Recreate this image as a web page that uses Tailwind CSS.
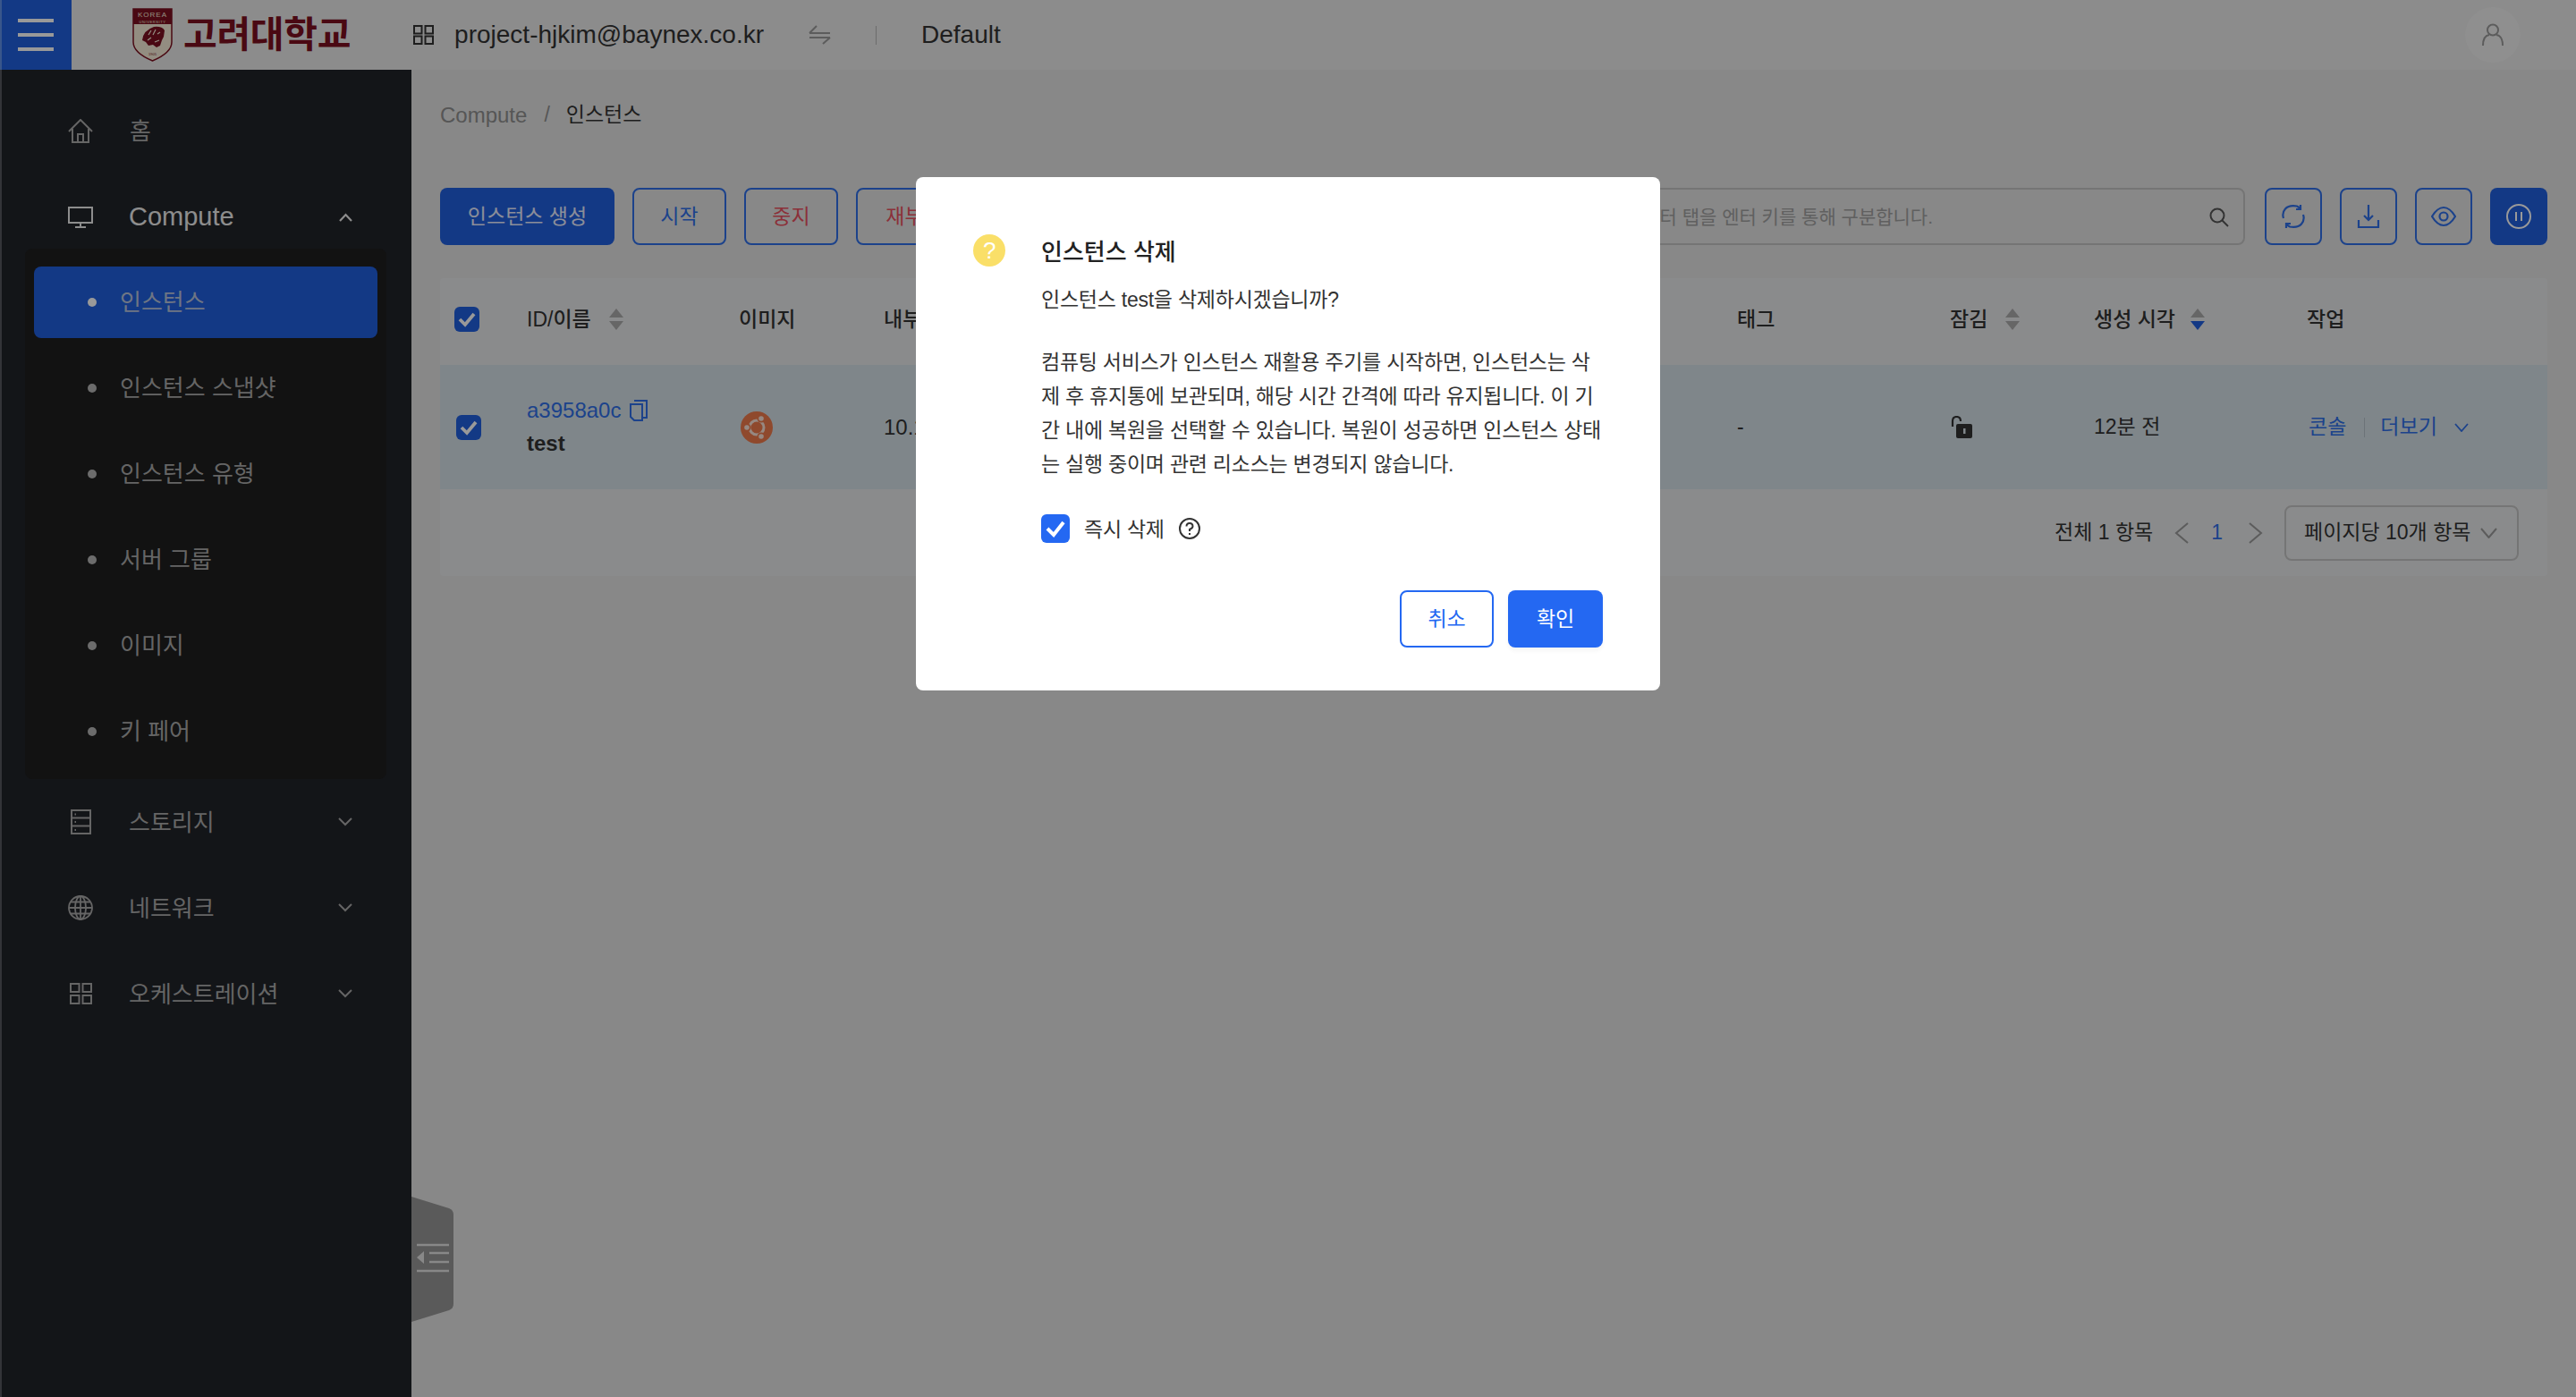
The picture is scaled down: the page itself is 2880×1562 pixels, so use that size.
<!DOCTYPE html>
<html lang="ko">
<head>
    <meta charset="UTF-8">
    <title>인스턴스</title>
    <script src="https://cdn.jsdelivr.net/npm/@tailwindcss/browser@4"></script>
</head>
<body class="relative h-[1562px] w-[2880px] overflow-hidden bg-[#e3e3e3] font-['Liberation_Sans','Noto_Sans_CJK_KR',sans-serif] text-[#333]">

    <!-- Header -->
    <header class="flex h-[78px] items-center bg-[#e9e9e9]">
        <div class="flex h-full w-[80px] flex-col items-center justify-center gap-[12px] border-l-2 border-[#5f8fe8] bg-[#215fde] pr-[2px]">
            <span class="h-[4px] w-[40px] bg-white"></span>
            <span class="h-[4px] w-[40px] bg-white"></span>
            <span class="h-[4px] w-[40px] bg-white"></span>
        </div>
        <div class="ml-[68px] flex items-center">
            <svg class="h-[60px] w-[45px]" viewBox="0 0 45 60">
                <path d="M1 1H44V38Q44 50 22.500 59Q1 50 1 38Z" fill="#f5ebd8" stroke="#7c1020" stroke-width="1.500"/>
                <rect x="1" y="1" width="43" height="17" fill="#7c1020"/>
                <text x="22.500" y="10" text-anchor="middle" font-size="8" letter-spacing="1" fill="#f5ebd8">KOREA</text>
                <text x="22.500" y="16.500" text-anchor="middle" font-size="4" letter-spacing=".6" fill="#f5ebd8">UNIVERSITY</text>
                <path d="M11 36Q12 25 24 21Q33 20 36 25L35 32L33 36L31 42L27 44L23 41L18 42L15 38Z" fill="#7c1020"/>
                <path d="M18 30L21 25M23 30L26 24M17 36L21 33M28 29L31 27M25 38L30 36" stroke="#f5ebd8" stroke-width="1.200"/>
                <text x="22.500" y="53" text-anchor="middle" font-size="4" fill="#7c1020">1905</text>
            </svg>
            <span class="ml-[12px] text-[41px] leading-none font-bold tracking-[-0.300px] text-[#7c1020]">고려대학교</span>
        </div>
        <svg class="ml-[70px] h-[22px] w-[23px] text-[#333]" viewBox="0 0 23 22" fill="none" stroke="currentColor" stroke-width="2">
            <rect x="1" y="1" width="8.500" height="8.500"/><rect x="13.500" y="1" width="8.500" height="8.500"/><rect x="1" y="12.500" width="8.500" height="8.500"/><rect x="13.500" y="12.500" width="8.500" height="8.500"/>
        </svg>
        <span class="ml-[23px] text-[28px] text-[#333]">project-hjkim@baynex.co.kr</span>
        <svg class="ml-[50px] h-[22px] w-[25px] text-[#9a9a9a]" viewBox="0 0 25 22" fill="none" stroke="currentColor" stroke-width="2">
            <path d="M1 9H24M1 9L9 1M24 14H1M24 14L16 21"/>
        </svg>
        <span class="ml-[50px] h-[21px] w-px bg-[#b5b5b5]"></span>
        <span class="ml-[50px] text-[28px] text-[#333]">Default</span>
        <div class="ml-auto mr-[62px] flex h-[62px] w-[62px] items-center justify-center rounded-full bg-[#eeeeee]">
            <svg class="h-[26px] w-[24px] text-[#999]" viewBox="0 0 24 26" fill="none" stroke="currentColor" stroke-width="2">
                <circle cx="12" cy="7.500" r="6"/><path d="M1 25Q1 14 8 13M23 25Q23 14 16 13"/>
            </svg>
        </div>
    </header>

    <div class="flex h-[1484px]">
        <!-- Sidebar -->
        <aside class="relative w-[460px] shrink-0 border-l-2 border-[#55585e] bg-[#212328] pt-[21px] text-[26px] text-[#a8a8a8]">
            <div class="flex h-[96px] items-center pl-[74px]">
                <svg class="h-[28px] w-[28px]" viewBox="0 0 28 28" fill="none" stroke="currentColor" stroke-width="2">
                    <path d="M1 14L14 1L27 14M5 11V26H23V11M11 26V17H17V26"/>
                </svg>
                <span class="ml-[41px]">홈</span>
            </div>
            <div class="flex h-[96px] items-center pl-[74px] text-[#ececec]">
                <svg class="h-[24px] w-[28px]" viewBox="0 0 28 24" fill="none" stroke="currentColor" stroke-width="2">
                    <rect x="1" y="1" width="26" height="17"/><path d="M14 18V23M8 23H20"/>
                </svg>
                <span class="ml-[40px] text-[29px]">Compute</span>
                <svg class="ml-auto mr-[66px] h-[10px] w-[15px]" viewBox="0 0 15 10" fill="none" stroke="currentColor" stroke-width="2.200"><path d="M1 9L7.500 2L14 9"/></svg>
            </div>
            <div class="-mt-[13px] ml-[26px] flex w-[404px] flex-col gap-[16px] rounded-[8px] bg-[#1e1e1e] px-[10px] pt-[20px] pb-[13px]">
                <a class="flex h-[80px] items-center gap-[26px] rounded-[8px] bg-[#215fde] pl-[60px] text-[#b8c4dc]"><span class="h-[10px] w-[10px] rounded-full bg-white"></span>인스턴스</a>
                <a class="flex h-[80px] items-center gap-[26px] pl-[60px]"><span class="h-[10px] w-[10px] rounded-full bg-[#b5b5b5]"></span>인스턴스 스냅샷</a>
                <a class="flex h-[80px] items-center gap-[26px] pl-[60px]"><span class="h-[10px] w-[10px] rounded-full bg-[#b5b5b5]"></span>인스턴스 유형</a>
                <a class="flex h-[80px] items-center gap-[26px] pl-[60px]"><span class="h-[10px] w-[10px] rounded-full bg-[#b5b5b5]"></span>서버 그룹</a>
                <a class="flex h-[80px] items-center gap-[26px] pl-[60px]"><span class="h-[10px] w-[10px] rounded-full bg-[#b5b5b5]"></span>이미지</a>
                <a class="flex h-[80px] items-center gap-[26px] pl-[60px]"><span class="h-[10px] w-[10px] rounded-full bg-[#b5b5b5]"></span>키 페어</a>
            </div>
            <div class="flex h-[96px] items-center pl-[77px]">
                <svg class="h-[28px] w-[23px]" viewBox="0 0 23 28" fill="none" stroke="currentColor" stroke-width="2">
                    <rect x="1" y="1" width="21" height="26"/><path d="M1 9.500H22M1 18.500H22"/><path d="M4.500 5.500H6M4.500 14H6M4.500 23H6"/>
                </svg>
                <span class="ml-[42px] pt-[2px]">스토리지</span>
                <svg class="ml-auto mr-[66px] h-[10px] w-[16px]" viewBox="0 0 16 10" fill="none" stroke="currentColor" stroke-width="2"><path d="M1 1L8 8L15 1"/></svg>
            </div>
            <div class="flex h-[96px] items-center pl-[74px]">
                <svg class="h-[28px] w-[28px]" viewBox="0 0 28 28" fill="none" stroke="currentColor" stroke-width="1.800">
                    <circle cx="14" cy="14" r="13"/><ellipse cx="14" cy="14" rx="6" ry="13"/><path d="M14 1V27M1 14H27M3 7.500H25M3 20.500H25"/>
                </svg>
                <span class="ml-[40px] pt-[2px]">네트워크</span>
                <svg class="ml-auto mr-[66px] h-[10px] w-[16px]" viewBox="0 0 16 10" fill="none" stroke="currentColor" stroke-width="2"><path d="M1 1L8 8L15 1"/></svg>
            </div>
            <div class="flex h-[96px] items-center pl-[76px]">
                <svg class="h-[24px] w-[25px]" viewBox="0 0 25 24" fill="none" stroke="currentColor" stroke-width="2">
                    <rect x="1" y="1" width="9.500" height="9"/><rect x="14.500" y="1" width="9.500" height="9"/><rect x="1" y="14" width="9.500" height="9"/><rect x="14.500" y="14" width="9.500" height="9"/>
                </svg>
                <span class="ml-[41px] pt-[2px]">오케스트레이션</span>
                <svg class="ml-auto mr-[66px] h-[10px] w-[16px]" viewBox="0 0 16 10" fill="none" stroke="currentColor" stroke-width="2"><path d="M1 1L8 8L15 1"/></svg>
            </div>
            <!-- collapse handle -->
            <svg class="absolute left-[458px] top-[1260px] h-[140px] w-[47px]" viewBox="0 0 47 140">
                <path d="M0 0L42 13Q47 15 47 20V120Q47 125 42 127L0 140Z" fill="#969696"/>
                <path d="M6 54H42M6 83H42M20 63H42M20 73H42" stroke="#e3e3e3" stroke-width="2.500"/>
                <path d="M14 61V75L6 68Z" fill="#e3e3e3"/>
            </svg>
        </aside>

        <!-- Main -->
        <main class="flex-1 pl-[32px] pr-[32px]">
            <div class="flex h-[99px] items-center pt-[2px] text-[23px] text-[#8f8f8f]">
                <span class="text-[24px]">Compute</span>
                <span class="ml-[19px] mr-[18px]">/</span>
                <span class="text-[#333]">인스턴스</span>
            </div>
            <div class="flex pt-[33px]">
                <div class="flex gap-[20px] text-[23px]">
                    <button class="h-[64px] w-[195px] rounded-[8px] bg-[#215fde] text-[#e8edff]">인스턴스 생성</button>
                    <button class="h-[64px] w-[105px] rounded-[8px] border-2 border-[#2f6fe8] text-[#2f6fe8]">시작</button>
                    <button class="h-[64px] w-[105px] rounded-[8px] border-2 border-[#2f6fe8] text-[#e8505f]">중지</button>
                    <button class="h-[64px] w-[130px] rounded-[8px] border-2 border-[#2f6fe8] text-[#e8505f]">재부팅</button>
                </div>
                <div class="ml-auto flex items-center gap-[20px]">
                    <div class="mr-[2px] flex h-[64px] w-[1200px] items-center justify-end rounded-[8px] border-2 border-[#c4c4c4] pr-[16px] pt-[2px] text-[21px] text-[#a0a0a0]">
                        <span>검색할 항목을 입력하고 각 필터 탭을 엔터 키를 통해 구분합니다.</span>
                        <svg class="ml-[309px] h-[22px] w-[22px] text-[#555]" viewBox="0 0 22 22" fill="none" stroke="currentColor" stroke-width="2"><circle cx="9" cy="9" r="7.500"/><path d="M14.500 14.500L21 21"/></svg>
                    </div>
                    <button class="flex h-[64px] w-[64px] items-center justify-center rounded-[8px] border-2 border-[#2f6fe8] text-[#2f6fe8]">
                        <svg class="h-[28px] w-[28px]" viewBox="0 0 28 28" fill="none" stroke="currentColor" stroke-width="2.200"><path d="M3 16Q1 10 5 5.500T18 2.500L22 5M25 12Q27 18 23 22.500T10 25.500L6 23"/><path d="M22 1V6H17M6 27V22H11"/></svg>
                    </button>
                    <button class="flex h-[64px] w-[64px] items-center justify-center rounded-[8px] border-2 border-[#2f6fe8] text-[#2f6fe8]">
                        <svg class="h-[28px] w-[26px]" viewBox="0 0 26 28" fill="none" stroke="currentColor" stroke-width="2.200"><path d="M13 1V17M8 13L13 18L18 13M2 18V26H24V18"/></svg>
                    </button>
                    <button class="flex h-[64px] w-[64px] items-center justify-center rounded-[8px] border-2 border-[#2f6fe8] text-[#2f6fe8]">
                        <svg class="h-[24px] w-[28px]" viewBox="0 0 28 24" fill="none" stroke="currentColor" stroke-width="2.200"><path d="M1 12Q7 2 14 2T27 12Q21 22 14 22T1 12Z"/><circle cx="14" cy="12" r="4.500"/></svg>
                    </button>
                    <button class="flex h-[64px] w-[64px] items-center justify-center rounded-[8px] bg-[#215fde] text-white">
                        <svg class="h-[28px] w-[28px]" viewBox="0 0 28 28" fill="none" stroke="currentColor" stroke-width="2"><circle cx="14" cy="14" r="13"/><path d="M11 9V19M17 9V19"/></svg>
                    </button>
                </div>
            </div>

            <!-- Table card -->
            <div class="mt-[37px] h-[333px] rounded-[4px] bg-[#e6e8ea] text-[23px]">
                <div class="grid h-[97px] grid-cols-[97px_239px_160px_954px_238px_161px_238px_1fr] items-center pb-[5px] font-medium text-[#333]">
                    <div class="pl-[16px]">
                        <span class="flex h-[28px] w-[28px] items-center justify-center rounded-[6px] bg-[#215fde]"><svg class="h-[18px] w-[20px]" viewBox="0 0 20 18" fill="none" stroke="white" stroke-width="3.800"><path d="M2 9L8 15L18 3"/></svg></span>
                    </div>
                    <div class="flex items-center"><span>ID/이름</span>
                        <svg class="ml-[20px] h-[24px] w-[16px]" viewBox="0 0 16 24"><path d="M8 0L16 10H0Z" fill="#aaaaaa"/><path d="M8 24L16 14H0Z" fill="#aaaaaa"/></svg>
                    </div>
                    <div class="-ml-[2px]">이미지</div>
                    <div>내부 IP</div>
                    <div>태그</div>
                    <div class="flex items-center"><span>잠김</span>
                        <svg class="ml-[20px] h-[24px] w-[16px]" viewBox="0 0 16 24"><path d="M8 0L16 10H0Z" fill="#aaaaaa"/><path d="M8 24L16 14H0Z" fill="#aaaaaa"/></svg>
                    </div>
                    <div class="flex items-center"><span>생성 시각</span>
                        <svg class="ml-[17px] h-[24px] w-[16px]" viewBox="0 0 16 24"><path d="M8 0L16 10H0Z" fill="#aaaaaa"/><path d="M8 24L16 14H0Z" fill="#215fde"/></svg>
                    </div>
                    <div>작업</div>
                </div>
                <div class="grid h-[139px] grid-cols-[97px_239px_160px_954px_238px_161px_238px_1fr] items-center bg-[#d4dfe6] text-[#333]">
                    <div class="pl-[18px]">
                        <span class="flex h-[28px] w-[28px] items-center justify-center rounded-[6px] bg-[#215fde]"><svg class="h-[18px] w-[20px]" viewBox="0 0 20 18" fill="none" stroke="white" stroke-width="3.800"><path d="M2 9L8 15L18 3"/></svg></span>
                    </div>
                    <div class="flex flex-col gap-[9px]">
                        <div class="flex items-center text-[#2f6fe8]">
                            <span class="text-[24px] leading-[28px]">a3958a0c</span>
                            <svg class="ml-[10px] h-[24px] w-[20px]" viewBox="0 0 20 24" fill="none" stroke="currentColor" stroke-width="2"><path d="M5 1H19V20H15M1 5H14V23H5L1 19Z"/></svg>
                        </div>
                        <span class="text-[24px] leading-[28px] font-bold">test</span>
                    </div>
                    <div>
                        <svg class="h-[36px] w-[36px]" viewBox="0 0 36 36"><circle cx="18" cy="18" r="18" fill="#ee7a4c"/><circle cx="18" cy="18" r="8" fill="none" stroke="#fbe3d8" stroke-width="3"/><circle cx="23" cy="8" r="4.500" fill="#ee7a4c"/><circle cx="23" cy="28" r="4.500" fill="#ee7a4c"/><circle cx="7" cy="18" r="4.500" fill="#ee7a4c"/><circle cx="23" cy="8" r="2.800" fill="#fbe3d8"/><circle cx="23" cy="28" r="2.800" fill="#fbe3d8"/><circle cx="7" cy="18" r="2.800" fill="#fbe3d8"/></svg>
                    </div>
                    <div class="text-[24px]">10.100.0.23</div>
                    <div>-</div>
                    <div>
                        <svg class="h-[25px] w-[25px]" viewBox="0 0 25 25"><path d="M3 12V6Q3 1 7.500 1T12 6" fill="none" stroke="#333" stroke-width="2.200"/><rect x="7" y="9" width="18" height="16" rx="2" fill="#333"/><rect x="15" y="14" width="2.500" height="6" fill="#d4dfe6"/></svg>
                    </div>
                    <div>12분 전</div>
                    <div class="flex items-center text-[#2f6fe8]">
                        <span class="ml-[2px]">콘솔</span>
                        <span class="ml-[20px] h-[22px] w-px bg-[#b5c0c8]"></span>
                        <span class="ml-[17px]">더보기</span>
                        <svg class="ml-[19px] h-[10px] w-[16px]" viewBox="0 0 16 10" fill="none" stroke="currentColor" stroke-width="1.800"><path d="M1 1L8 9L15 1"/></svg>
                    </div>
                </div>
                <div class="flex h-[97px] items-center justify-end pr-[32px] text-[#333]">
                    <span>전체 1 항목</span>
                    <svg class="ml-[24px] h-[24px] w-[16px] text-[#999]" viewBox="0 0 16 24" fill="none" stroke="currentColor" stroke-width="2"><path d="M15 1L2 12L15 23"/></svg>
                    <span class="ml-[25px] text-[#2f6fe8]">1</span>
                    <svg class="ml-[29px] h-[24px] w-[16px] text-[#999]" viewBox="0 0 16 24" fill="none" stroke="currentColor" stroke-width="2"><path d="M1 1L14 12L1 23"/></svg>
                    <div class="ml-[24px] flex h-[62px] w-[262px] items-center rounded-[8px] border-2 border-[#c4c4c4] pl-[20px]">
                        <span>페이지당 10개 항목</span>
                        <svg class="ml-auto mr-[22px] h-[12px] w-[19px] text-[#999]" viewBox="0 0 19 12" fill="none" stroke="currentColor" stroke-width="2"><path d="M1 1L9.500 11L18 1"/></svg>
                    </div>
                </div>
            </div>
        </main>
    </div>

    <!-- Modal mask -->
    <div class="absolute inset-0 bg-black/40"></div>

    <!-- Delete dialog -->
    <div class="absolute left-[1024px] top-[198px] flex h-[574px] w-[832px] gap-[40px] rounded-[8px] bg-white px-[64px] pt-[64px] text-[23px] leading-[38.100px] tracking-[-0.250px] whitespace-nowrap text-[#333]">
        <div class="flex h-[36px] w-[36px] shrink-0 items-center justify-center rounded-full bg-[#fadf68] text-[26px] leading-none text-white">?</div>
        <div class="flex-1">
            <h2 class="flex h-[36px] items-center pt-[5px] text-[26px] font-medium tracking-normal text-[#222]">인스턴스 삭제</h2>
            <p class="mt-[18px]">인스턴스 test을 삭제하시겠습니까?</p>
            <p class="mt-[32px]">컴퓨팅 서비스가 인스턴스 재활용 주기를 시작하면, 인스턴스는 삭<br>제 후 휴지통에 보관되며, 해당 시간 간격에 따라 유지됩니다. 이 기<br>간 내에 복원을 선택할 수 있습니다. 복원이 성공하면 인스턴스 상태<br>는 실행 중이며 관련 리소스는 변경되지 않습니다.</p>
            <div class="mt-[37px] flex h-[32px] items-center">
                <span class="flex h-[32px] w-[32px] items-center justify-center rounded-[6px] bg-[#2468f2]"><svg class="h-[20px] w-[22px]" viewBox="0 0 22 20" fill="none" stroke="white" stroke-width="4"><path d="M2 10L9 17L20 3"/></svg></span>
                <span class="ml-[16px] pt-[2px]">즉시 삭제</span>
                <svg class="ml-[16px] h-[24px] w-[24px]" viewBox="0 0 24 24" fill="none" stroke="#333" stroke-width="2"><circle cx="12" cy="12" r="11"/><path d="M8.500 9.500Q8.500 6 12 6T15.500 9.500Q15.500 11.500 12 13V15M12 17V19"/></svg>
            </div>
            <div class="mt-[53px] flex justify-end gap-[16px]">
                <button class="h-[64px] w-[105px] rounded-[8px] border-2 border-[#2468f2] text-[#2468f2]">취소</button>
                <button class="h-[64px] w-[106px] rounded-[8px] bg-[#2468f2] text-white shadow-[0_4px_4px_rgba(0,0,0,0.04)]">확인</button>
            </div>
        </div>
    </div>
</body>
</html>
